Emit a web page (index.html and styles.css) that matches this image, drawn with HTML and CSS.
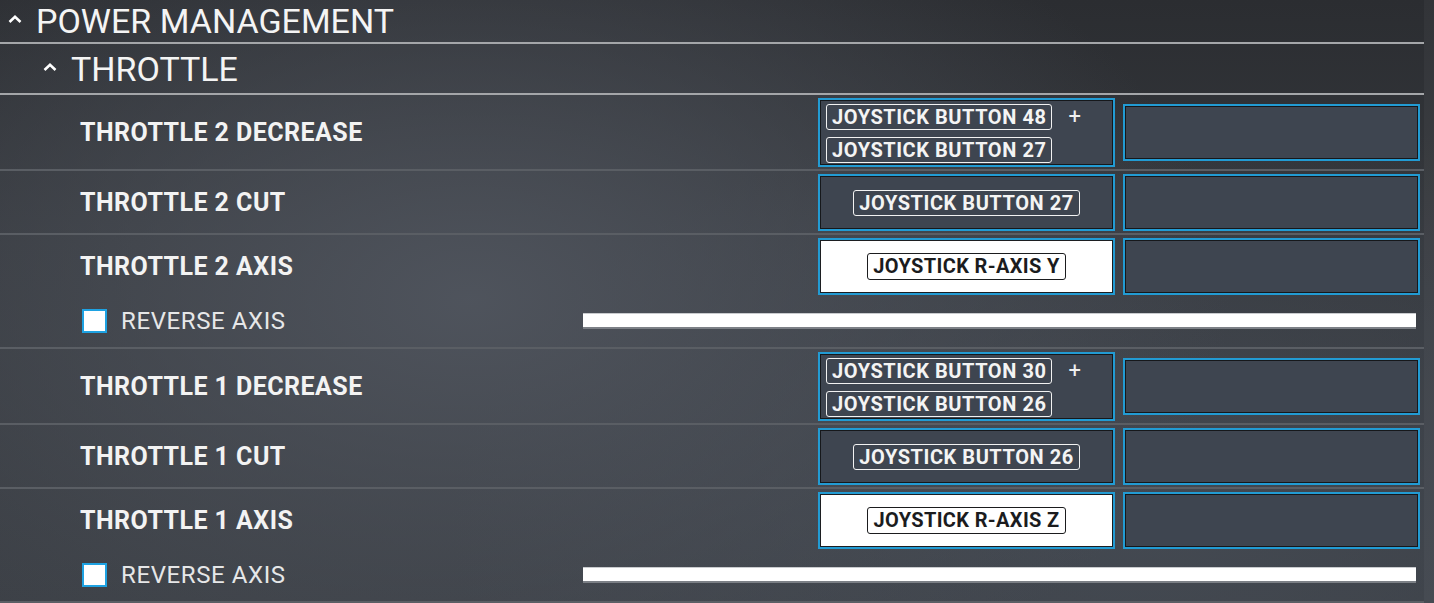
FILE: index.html
```html
<!DOCTYPE html>
<html lang="en">
<head>
<meta charset="utf-8">
<title>Controls - Power Management</title>
<link rel="stylesheet" href="styles.css">
</head>
<body>
<div class="page">
  <div class="list">
    <div class="cat">
      <svg class="caret" width="14" height="8" viewBox="0 0 14 8"><polyline points="1.5,7 7,1.8 12.5,7" fill="none" stroke="#fff" stroke-width="2.6"/></svg>
      <span>POWER MANAGEMENT</span>
    </div>
    <div class="cat sub">
      <svg class="caret" width="14" height="8" viewBox="0 0 14 8"><polyline points="1.5,7 7,1.8 12.5,7" fill="none" stroke="#fff" stroke-width="2.6"/></svg>
      <span>THROTTLE</span>
    </div>

    <div class="row">
      <div class="row-main">
        <div class="label">THROTTLE 2 DECREASE</div>
        <div class="binds">
          <div class="slot multi">
            <div class="combo"><span class="chip">JOYSTICK BUTTON 48</span><span class="plus">+</span></div>
            <span class="chip">JOYSTICK BUTTON 27</span>
          </div>
          <div class="slot"></div>
        </div>
      </div>
    </div>

    <div class="row">
      <div class="row-main">
        <div class="label">THROTTLE 2 CUT</div>
        <div class="binds">
          <div class="slot"><span class="chip">JOYSTICK BUTTON 27</span></div>
          <div class="slot"></div>
        </div>
      </div>
    </div>

    <div class="row">
      <div class="row-main">
        <div class="label">THROTTLE 2 AXIS</div>
        <div class="binds">
          <div class="slot active"><span class="chip">JOYSTICK R-AXIS Y</span></div>
          <div class="slot"></div>
        </div>
      </div>
      <div class="reverse">
        <div class="rev-label"><span class="check"></span><span>REVERSE AXIS</span></div>
        <div class="bar"></div>
      </div>
    </div>

    <div class="row">
      <div class="row-main">
        <div class="label">THROTTLE 1 DECREASE</div>
        <div class="binds">
          <div class="slot multi">
            <div class="combo"><span class="chip">JOYSTICK BUTTON 30</span><span class="plus">+</span></div>
            <span class="chip">JOYSTICK BUTTON 26</span>
          </div>
          <div class="slot"></div>
        </div>
      </div>
    </div>

    <div class="row">
      <div class="row-main">
        <div class="label">THROTTLE 1 CUT</div>
        <div class="binds">
          <div class="slot"><span class="chip">JOYSTICK BUTTON 26</span></div>
          <div class="slot"></div>
        </div>
      </div>
    </div>

    <div class="row">
      <div class="row-main">
        <div class="label">THROTTLE 1 AXIS</div>
        <div class="binds">
          <div class="slot active"><span class="chip">JOYSTICK R-AXIS Z</span></div>
          <div class="slot"></div>
        </div>
      </div>
      <div class="reverse">
        <div class="rev-label"><span class="check"></span><span>REVERSE AXIS</span></div>
        <div class="bar"></div>
      </div>
    </div>
  </div>
  <div class="gutter"></div>
</div>
</body>
</html>
```

FILE: styles.css
```css
html, body {
  margin: 0;
  padding: 0;
  height: 100%;
  overflow: hidden;
}

body {
  font-family: Roboto, "Liberation Sans", Arial, sans-serif;
  color: #f4f4f4;
  background:
    radial-gradient(ellipse 760px 460px at 470px 300px, rgba(80, 85, 94, 0.95) 0%, rgba(80, 85, 94, 0) 100%),
    radial-gradient(ellipse 700px 420px at 1150px 520px, rgba(70, 76, 85, 0.8) 0%, rgba(70, 76, 85, 0) 100%),
    linear-gradient(180deg, #2b2d31 0%, #35383d 40%, #3b3f45 100%);
}

.page {
  display: flex;
  height: 603px;
}

.list {
  width: 1424px;
  flex: none;
}

.gutter {
  flex: 1;
  background: rgba(255, 255, 255, 0.035);
}

/* Category headers */
.cat {
  display: flex;
  align-items: center;
  gap: 14px;
  height: 44px;
  padding-left: 8px;
  box-sizing: border-box;
  font-size: 34px;
  line-height: 34px;
  font-weight: 400;
  border-bottom: 2px solid #a4a6a9;
}

.cat.sub {
  height: 51px;
  padding-left: 43px;
}

.caret {
  flex: none;
  display: block;
  margin-top: -4px;
}

/* Rows */
.row {
  border-bottom: 2px solid #5a5e64;
}

.row-main {
  display: flex;
  align-items: center;
  padding: 3px 0 2px;
}

.label {
  flex: 1;
  padding-left: 80px;
  font-size: 25px;
  font-weight: 700;
  letter-spacing: 0.45px;
  line-height: 28px;
  color: #f3f3f3;
}

.binds {
  display: flex;
  align-items: center;
  gap: 8px;
  margin-right: 4px;
}

.slot {
  width: 297px;
  height: 57px;
  box-sizing: border-box;
  border: 2px solid #229bd3;
  box-shadow: inset 0 0 0 1px #16181b;
  background: #3e4550;
  display: flex;
  align-items: center;
  justify-content: center;
}

.slot.multi {
  height: 69px;
  flex-direction: column;
  align-items: flex-start;
  justify-content: flex-start;
  gap: 7px;
  padding: 4px 6px 0;
}

.slot.active {
  background: #ffffff;
  box-shadow: inset 0 0 0 1px #1c1e21;
}

.combo {
  display: flex;
  align-items: center;
  gap: 16px;
}

.chip {
  display: inline-block;
  font-size: 20px;
  font-weight: 700;
  letter-spacing: 0.55px;
  line-height: 24px;
  padding: 0 5px;
  border: 1.5px solid #f2f2f2;
  border-radius: 3px;
  color: #f4f4f4;
  white-space: nowrap;
}

.slot.active .chip {
  color: #1b1c1e;
  border-color: #1b1c1e;
  letter-spacing: 0.35px;
  line-height: 25px;
}

.plus {
  font-size: 22px;
  line-height: 22px;
  color: #f0f0f0;
}

/* Reverse axis line */
.reverse {
  display: flex;
  align-items: center;
  height: 48px;
  padding-bottom: 2px;
}

.rev-label {
  width: 583px;
  flex: none;
  display: flex;
  align-items: center;
  gap: 14px;
  padding-left: 82px;
  box-sizing: border-box;
  font-size: 24px;
  letter-spacing: 0.6px;
  line-height: 26px;
  color: #e6e7e8;
}

.check {
  width: 25px;
  height: 24px;
  box-sizing: border-box;
  border: 2px solid #1ea2e2;
  background: #ffffff;
  flex: none;
}

.bar {
  flex: 1;
  height: 16px;
  box-sizing: border-box;
  margin-right: 8px;
  background: #ffffff;
  border-top: 1px solid #c9cbce;
  border-bottom: 2px solid #7c8086;
}
```
